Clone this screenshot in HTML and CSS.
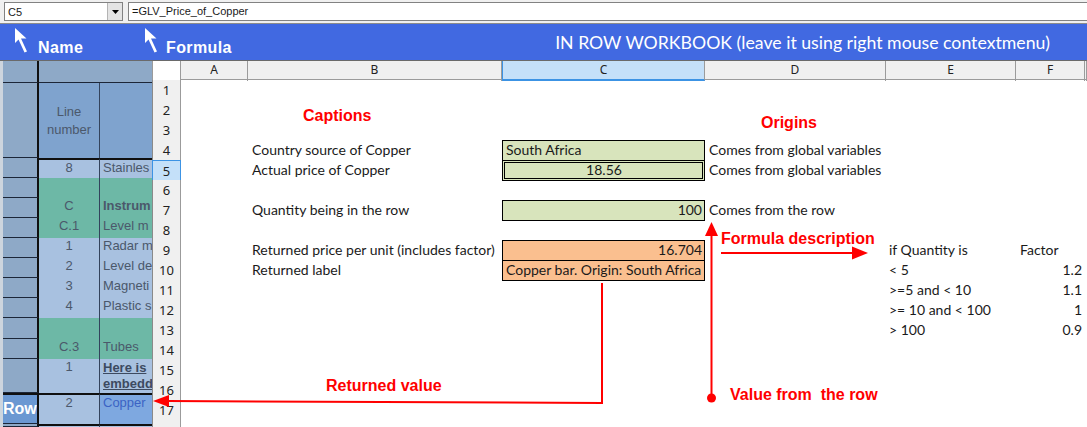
FILE: index.html
```html
<!DOCTYPE html>
<html lang="en">
<head>
    <meta charset="UTF-8">
    <title>In Row Workbook</title>
    <link rel="stylesheet" href="styles.css">
</head>
<body>
<div class="app">
    <div class="formula-bar">
        <div class="name-box">
            <span>C5</span>
            <span class="drop-btn">
                <svg width="7" height="4" viewBox="0 0 7 4"><path d="M0 0h7L3.5 4z" fill="#000"/></svg>
            </span>
        </div>
        <div class="formula-input">=GLV_Price_of_Copper</div>
    </div>

    <div class="title-bar">
        <div class="hint hint-name">
            <svg class="pointer" width="14" height="26" viewBox="0 0 14 26">
                <path d="M1 1V16L4.5 12.5L10.5 25.5L13 24.5L7 11.5H12.5Z" fill="#fff"/>
            </svg>
            <span>Name</span>
        </div>
        <div class="hint">
            <svg class="pointer" width="14" height="26" viewBox="0 0 14 26">
                <path d="M1 1V16L4.5 12.5L10.5 25.5L13 24.5L7 11.5H12.5Z" fill="#fff"/>
            </svg>
            <span>Formula</span>
        </div>
        <div class="title">IN ROW WORKBOOK (leave it using right mouse contextmenu)</div>
    </div>

    <div class="workspace">
        <!-- row list of the calling workbook -->
        <div class="row-panel">
            <div class="pc key"></div><div class="pc head"></div><div class="pc head"></div>
            <div class="pc key"></div><div class="pc ln-head split">Line<br>number</div><div class="pc ln-head"></div>
            <div class="pc key"></div><div class="pc num item rule split">8</div><div class="pc txt item rule">Stainles</div>
            <div class="pc key"></div><div class="pc group split"></div><div class="pc group"></div>
            <div class="pc key"></div><div class="pc num group split">C</div><div class="pc txt group strong">Instrum</div>
            <div class="pc key"></div><div class="pc num group split">C.1</div><div class="pc txt group">Level m</div>
            <div class="pc key"></div><div class="pc num item split">1</div><div class="pc txt item">Radar m</div>
            <div class="pc key"></div><div class="pc num item split">2</div><div class="pc txt item">Level de</div>
            <div class="pc key"></div><div class="pc num item split">3</div><div class="pc txt item">Magneti</div>
            <div class="pc key"></div><div class="pc num item split">4</div><div class="pc txt item">Plastic s</div>
            <div class="pc key"></div><div class="pc group split"></div><div class="pc group"></div>
            <div class="pc key"></div><div class="pc num group split">C.3</div><div class="pc txt group">Tubes</div>
            <div class="pc key"></div><div class="pc num item split">1</div><div class="pc txt item link">Here is<br>embedd</div>
            <div class="pc key key-row rule">Row</div><div class="pc num item rule split">2</div><div class="pc txt current rule">Copper</div>
            <div class="pc key"></div><div class="pc item rule split"></div><div class="pc item rule"></div>
        </div>

        <div class="sheet">
            <div class="sheet-row col-heads">
                <div class="corner"></div>
                <div class="ch">A</div>
                <div class="ch">B</div>
                <div class="ch ch-active">C</div>
                <div class="ch">D</div>
                <div class="ch">E</div>
                <div class="ch">F</div>
                <div class="ch"></div>
            </div>
            <div class="sheet-row"><div class="rh">1</div></div>
            <div class="sheet-row"><div class="rh">2</div></div>
            <div class="sheet-row"><div class="rh">3</div></div>
            <div class="sheet-row">
                <div class="rh">4</div>
                <div class="cell col-b">Country source of Copper</div>
                <div class="cell col-c box-green">South Africa</div>
                <div class="cell col-d">Comes from global variables</div>
            </div>
            <div class="sheet-row">
                <div class="rh rh-active">5</div>
                <div class="cell col-b">Actual price of Copper</div>
                <div class="cell col-c box-green selected center">18.56</div>
                <div class="cell col-d">Comes from global variables</div>
            </div>
            <div class="sheet-row"><div class="rh">6</div></div>
            <div class="sheet-row">
                <div class="rh">7</div>
                <div class="cell col-b">Quantity being in the row</div>
                <div class="cell col-c box-green right">100</div>
                <div class="cell col-d">Comes from the row</div>
            </div>
            <div class="sheet-row"><div class="rh">8</div></div>
            <div class="sheet-row">
                <div class="rh">9</div>
                <div class="cell col-b">Returned price per unit (includes factor)</div>
                <div class="cell col-c box-orange right">16.704</div>
                <div class="cell col-e">if Quantity is</div>
                <div class="cell col-f">Factor</div>
            </div>
            <div class="sheet-row">
                <div class="rh">10</div>
                <div class="cell col-b">Returned label</div>
                <div class="cell col-c box-orange">Copper bar. Origin: South Africa</div>
                <div class="cell col-e">&lt; 5</div>
                <div class="cell col-f right">1.2</div>
            </div>
            <div class="sheet-row">
                <div class="rh">11</div>
                <div class="cell col-e">&gt;=5 and &lt; 10</div>
                <div class="cell col-f right">1.1</div>
            </div>
            <div class="sheet-row">
                <div class="rh">12</div>
                <div class="cell col-e">&gt;= 10 and &lt; 100</div>
                <div class="cell col-f right">1</div>
            </div>
            <div class="sheet-row">
                <div class="rh">13</div>
                <div class="cell col-e">&gt; 100</div>
                <div class="cell col-f right">0.9</div>
            </div>
            <div class="sheet-row"><div class="rh">14</div></div>
            <div class="sheet-row"><div class="rh">15</div></div>
            <div class="sheet-row"><div class="rh">16</div></div>
            <div class="sheet-row"><div class="rh">17</div></div>
            <div class="sheet-row"><div class="rh"></div></div>

            <!-- annotations drawn over the sheet -->
            <div class="notes">
                <svg class="arrows" width="935" height="366" viewBox="0 0 935 366">
                    <g stroke="#f00" stroke-width="2" fill="none">
                        <path d="M569 192H702"/>
                        <path d="M559.5 337V172"/>
                        <path d="M450 222V342L16 340"/>
                    </g>
                    <g fill="#f00">
                        <path d="M700 185.5L716 192L700 198.5Z"/>
                        <path d="M553 175L559.5 161L566 175Z"/>
                        <path d="M17 334L1 340L17 346Z"/>
                        <circle cx="559.5" cy="337" r="4.5"/>
                    </g>
                </svg>
                <span class="note note-captions">Captions</span>
                <span class="note note-origins">Origins</span>
                <span class="note note-formula">Formula description</span>
                <span class="note note-returned">Returned value</span>
                <span class="note note-value">Value from&nbsp; the row</span>
            </div>
        </div>
    </div>
</div>
</body>
</html>
```

FILE: styles.css
```css
:root {
    --bar-blue: #4169e1;
    --head-bg: #f0f0f0;
    --head-line: #9b9b9b;
    --active-bg: #c4e0f9;
    --active-line: #3c93e4;
    --panel-key: #8ea9c7;
    --panel-item: #a8c1e0;
    --panel-group: #6db8a6;
    --panel-dark: #1c2638;
    --note-red: #ff0000;
    --cell-font: Lato, "Open Sans", sans-serif;
}

* {
    margin: 0;
    padding: 0;
    box-sizing: border-box;
}

html,
body {
    width: 1087px;
    height: 427px;
    overflow: hidden;
}

body {
    font-family: "Liberation Sans", Arial, sans-serif;
    background: #fff;
    color: #1a1a1a;
}

/* formula bar */
.formula-bar {
    display: flex;
    gap: 5px;
    height: 24px;
    padding: 2px 0 0 4px;
    background: var(--head-bg);
    border-bottom: 1px solid #8c8c8c;
}

.name-box {
    width: 119px;
    height: 19px;
    display: flex;
    align-items: center;
    justify-content: space-between;
    padding-left: 3px;
    background: #fff;
    border: 1px solid #828282;
    font-size: 11px;
}

.drop-btn {
    width: 15px;
    height: 17px;
    display: flex;
    align-items: center;
    justify-content: center;
    background: #e4e4e4;
    border-left: 1px solid #b4b4b4;
}

.formula-input {
    flex: 1;
    height: 19px;
    padding-left: 3px;
    background: #fff;
    border: 1px solid #828282;
    border-right: none;
    font-size: 11px;
    line-height: 17px;
}

/* blue title bar */
.title-bar {
    display: flex;
    height: 37px;
    padding-left: 14px;
    background: var(--bar-blue);
    border-bottom: 1px solid #6a6a6a;
    color: #fff;
}

.hint {
    display: flex;
    gap: 8px;
    font-weight: bold;
    font-size: 16px;
    letter-spacing: 0.4px;
}

.hint-name {
    width: 130px;
    gap: 10px;
}

.pointer {
    margin-top: 3px;
}

.hint span {
    margin-top: 15px;
}

.title {
    margin-left: auto;
    margin-right: 37px;
    align-self: center;
    font-family: var(--cell-font);
    font-size: 17.7px;
}

/* work area */
.workspace {
    display: flex;
    height: 366px;
}

.row-panel {
    width: 152px;
    display: grid;
    grid-template-columns: 36px 61px 52px;
    grid-template-rows: 22px 75px repeat(8, 20px) 21px 20px 34px 31px 1fr;
    padding-left: 3px;
    background: #cdd5de;
    font-size: 13px;
    color: #4b586b;
}

.pc {
    overflow: hidden;
    white-space: nowrap;
    line-height: 16px;
}

.key {
    background: var(--panel-key);
    border-right: 2px solid #101010;
    border-bottom: 1px solid var(--panel-dark);
}

.key-row {
    background: #6b98d2;
    color: #fff;
    font-weight: bold;
    font-size: 16px;
    line-height: 28px;
}

.head {
    background: var(--panel-key);
    border-bottom: 1px solid var(--panel-dark);
}

.ln-head {
    background: #7fa3ce;
    display: flex;
    align-items: center;
    justify-content: center;
    text-align: center;
    line-height: 18px;
}

.split {
    border-right: 1px solid #33435c;
}

.item {
    background: var(--panel-item);
}

.group {
    background: var(--panel-group);
}

.current {
    background: #7ea8e0;
    color: #3b63c4;
}

.rule {
    border-top: 2px solid #101010;
}

.num {
    text-align: center;
}

.txt {
    padding-left: 3px;
}

.strong {
    font-weight: bold;
}

.link {
    font-weight: bold;
    text-decoration: underline;
    color: #3d4a60;
    padding-top: 1px;
}

/* spreadsheet */
.sheet {
    position: relative;
    flex: 1;
    overflow: hidden;
    font-family: var(--cell-font);
    font-size: 14px;
}

.sheet-row {
    display: grid;
    grid-template-columns: 29px 67px 254px 203px 181px 130px 69px 1fr;
    height: 20px;
}

.col-heads {
    height: 19px;
    background: var(--head-bg);
    border-bottom: 1px solid var(--head-line);
}

.corner {
    background: #fff;
    border-right: 1px solid var(--head-line);
    border-left: 1px solid var(--head-line);
}

.ch {
    text-align: center;
    font-family: "Noto Sans", sans-serif;
    font-size: 12px;
    line-height: 18px;
    color: #222;
    border-right: 1px solid var(--head-line);
}

.ch-active {
    background: var(--active-bg);
    border-left: 1px solid var(--active-line);
    border-bottom: 2px solid var(--active-line);
}

.rh {
    grid-column: 1;
    text-align: center;
    font-family: "Noto Sans", sans-serif;
    font-size: 13px;
    line-height: 20px;
    color: #222;
    background: var(--head-bg);
    border-left: 1px solid #8a8a8a;
    border-right: 1px solid var(--head-line);
    border-bottom: 1px solid var(--head-line);
}

.rh-active {
    background: var(--active-bg);
    border: 1px solid var(--active-line);
}

.cell {
    padding: 0 3px 0 4px;
    line-height: 20px;
    white-space: nowrap;
    overflow: visible;
}

.col-b { grid-column: 3; }
.col-c { grid-column: 4; }
.col-d { grid-column: 5; }
.col-e { grid-column: 6; padding-left: 3px; }
.col-f { grid-column: 7; }

.right { text-align: right; }
.center { text-align: center; }

.box-green,
.box-orange {
    border: 1px solid #000;
    line-height: 18px;
    padding-left: 3px;
    padding-right: 2px;
}

.box-green {
    background: #d8e4bc;
}

.box-orange {
    background: #fabf8f;
}

.selected {
    border: 3px double #000;
    line-height: 14px;
    height: 21px;
}

/* annotations */
.notes {
    position: absolute;
    inset: 0;
    pointer-events: none;
}

.arrows {
    position: absolute;
    top: 0;
    left: 0;
}

.note {
    position: absolute;
    color: var(--note-red);
    font-family: "Liberation Sans", Arial, sans-serif;
    font-weight: bold;
    font-size: 16px;
    line-height: 18px;
    white-space: nowrap;
}

.note-captions { left: 151px; top: 46px; }
.note-origins { left: 609px; top: 53px; }
.note-formula { left: 569px; top: 169px; }
.note-returned { left: 174px; top: 316px; }
.note-value { left: 578px; top: 325px; }
```
